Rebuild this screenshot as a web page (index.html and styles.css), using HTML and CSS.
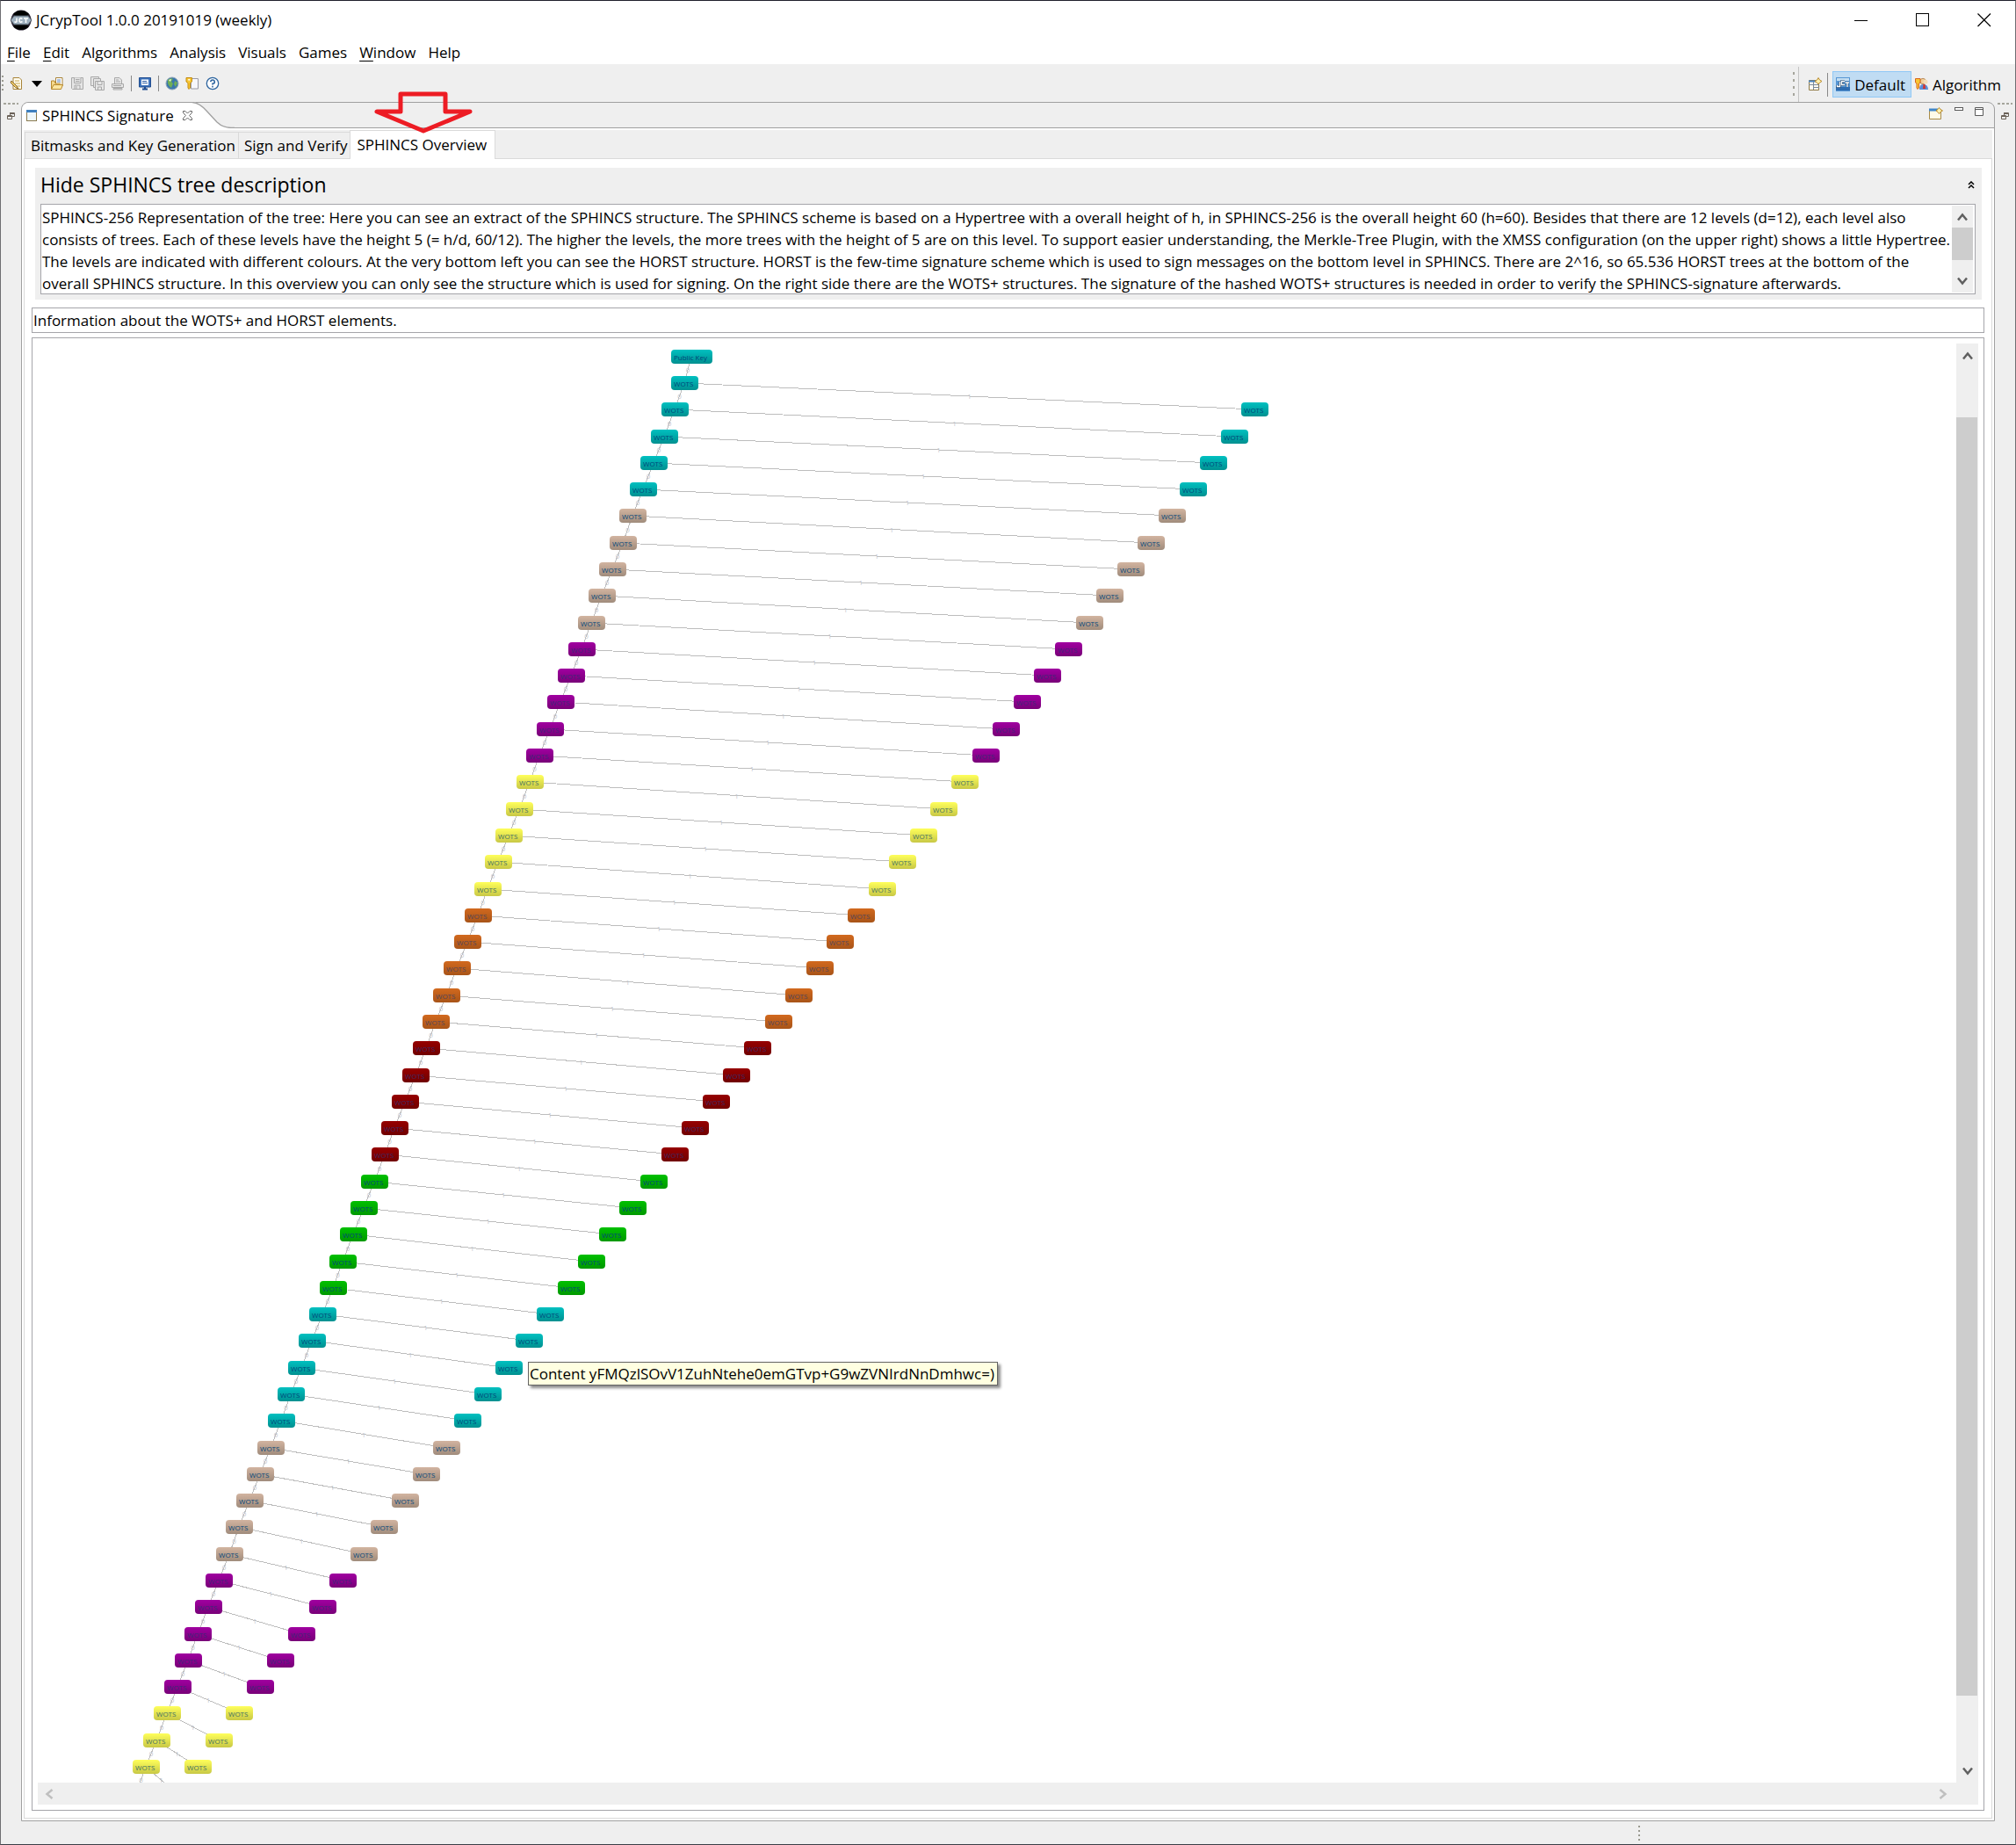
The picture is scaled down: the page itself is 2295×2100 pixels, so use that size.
FILE: index.html
```html
<!DOCTYPE html>
<html lang="en">
<head>
<meta charset="utf-8">
<title>JCrypTool 1.0.0 20191019 (weekly)</title>
<link rel="stylesheet" href="styles.css">
</head>
<body>
<div class="window">
  <header class="titlebar">
    <svg class="app-icon" width="24" height="24" viewBox="0 0 24 24">
      <circle cx="12" cy="12" r="11.5" fill="#2a2333"/>
      <path d="M3 5Q12-3 21 5L19 7H5ZM3 19Q12 27 21 19L19 17H5Z" fill="#000"/>
      <path d="M0 12L4 7H20L24 12L20 17H4Z" fill="#9fb0bf" stroke="#49525c"/>
      <path d="M7 9.500V13.500Q6 15 4.500 13.500M13.500 10.500Q10 8.500 10 12T13.500 13.500M15 10H20M17.500 10V15" fill="none" stroke="#fff" stroke-width="1.500"/>
    </svg>
    <h1 class="app-title">JCrypTool 1.0.0 20191019 (weekly)</h1>
    <div class="window-controls">
      <button class="control" aria-label="Minimize"><svg width="16" height="16"><path d="M0 8.500H15" stroke="#000"/></svg></button>
      <button class="control" aria-label="Maximize"><svg width="16" height="16"><rect x=".5" y=".5" width="14" height="14" fill="none" stroke="#000"/></svg></button>
      <button class="control" aria-label="Close"><svg width="16" height="16"><path d="M.5.5L15 15M15 .5L.5 15" stroke="#000" stroke-width="1.200"/></svg></button>
    </div>
  </header>
  <nav class="menubar">
    <button><u>F</u>ile</button>
    <button><u>E</u>dit</button>
    <button>Algorithms</button>
    <button>Analysis</button>
    <button>Visuals</button>
    <button>Games</button>
    <button><u>W</u>indow</button>
    <button>Help</button>
  </nav>

  <div class="toolbar">
    <span class="grip"></span>
    <button class="tool" aria-label="New"><svg width="16" height="16" viewBox="0 0 16 16"><path d="M4 1.500H11L13.500 4V14.500H4Z" fill="#fffdf0" stroke="#a88338"/><path d="M6 5H11M6 8H12M6 11H12" stroke="#c9a64e"/><path d="M2 5L8 11L10 14L6.500 12.500L1 7Z" fill="#f2cf6c" stroke="#8b6a2c"/></svg></button>
    <button class="tool" aria-label="New menu"><svg width="16" height="16" viewBox="0 0 16 16"><path d="M2 5H14L8 12Z" fill="#000"/></svg></button>
    <button class="tool" aria-label="Open"><svg width="16" height="16" viewBox="0 0 16 16"><path d="M6.500 1.500H14V11H6.500Z" fill="#fff" stroke="#a88338"/><path d="M8 4H12M8 6H12" stroke="#5f86bd"/><path d="M1.500 14V5H5L6 8H12" fill="#f5d98c" stroke="#b98a2d"/><path d="M1.500 14.500L4 9.500H14.500L12.500 14.500Z" fill="#fbe6a2" stroke="#b98a2d"/></svg></button>
    <button class="tool" aria-label="Save" disabled><svg width="16" height="16" viewBox="0 0 16 16" fill="#e6e6e6" stroke="#a8a8a8"><path d="M1.500 1.500H14.500V14.500H2.500L1.500 13.500Z"/><path d="M4.500 1.500V7.500H12V1.500M5 14V10H11V14M6 3.500H10.500M6 5.500H10.500M7 11V14"/></svg></button>
    <button class="tool" aria-label="Save all" disabled><svg width="16" height="16" viewBox="0 0 16 16" fill="#e6e6e6" stroke="#a8a8a8"><path d="M.5.5H9.500V10.500H.5Z"/><path d="M3.500 2.500H11.500V12.500H3.500Z"/><path d="M5.500 5.500H15.500V15.500H5.500Z"/><path d="M8 6V9.500H13V6M8.500 15V12H12.500V15"/></svg></button>
    <button class="tool" aria-label="Print" disabled><svg width="16" height="16" viewBox="0 0 16 16" fill="#e6e6e6" stroke="#a8a8a8"><path d="M4.500 8V1.500H10L12.500 4V8M6 4H9M6 6H11"/><path d="M1.500 8.500H14.500V12.500H1.500Z"/><path d="M3 13.500H13V15H3ZM3 10.500H12"/></svg></button>
    <span class="divider"></span>
    <button class="tool" aria-label="Console"><svg width="16" height="16" viewBox="0 0 16 16"><path d="M1.500 1.500H14.500V12H1.500Z" fill="#3f74bd" stroke="#1f4c8f"/><path d="M4 3.500H12V10H4Z" fill="#fff"/><path d="M5 5.500H10M5 7.500H11" stroke="#2f5fa5"/><path d="M5 14.500H11M8 12V14" stroke="#1f4c8f" stroke-width="2"/></svg></button>
    <span class="divider"></span>
    <button class="tool" aria-label="Web"><svg width="16" height="16" viewBox="0 0 16 16"><circle cx="8" cy="8" r="7" fill="#3976ae" stroke="#8fa5b5"/><path d="M3 4Q6 1 9 3L7 6L9 8L7 13Q2 10 3 4ZM11 5L14 7L12 12L10 9Z" fill="#6fae57"/><path d="M4 4L7 3L6 6Z" fill="#eef6e6"/></svg></button>
    <button class="tool" aria-label="Keystore"><svg width="16" height="16" viewBox="0 0 16 16"><path d="M6.500 2.500H14.500V14H6.500Z" fill="#f7f7fb" stroke="#9a9aa4"/><path d="M1 1.500H7.500V6L5.500 7.500V13L4 14.500L3 13V7.500L1 6Z" fill="#f8c633" stroke="#c28b12"/><circle cx="4.200" cy="3.800" r="1" fill="#fff"/></svg></button>
    <button class="tool" aria-label="Help"><svg width="16" height="16" viewBox="0 0 16 16"><circle cx="8" cy="8" r="6.700" fill="#fff" stroke="#2d649f" stroke-width="1.300"/><path d="M5.700 6.200Q6 4 8 4T10.300 6T8 8.300V9.500M8 10.800V12.400" fill="none" stroke="#2d649f" stroke-width="1.600"/></svg></button>
    <div class="perspectives">
      <span class="grip"></span>
      <span class="edge"></span>
      <button class="tool open-perspective" aria-label="Open perspective"><svg width="16" height="16" viewBox="0 0 16 16"><path d="M1.500 3.500H12.500V14.500H1.500Z" fill="#fffdf2" stroke="#8f7a45"/><path d="M1 4.500H11" stroke="#4a85c4" stroke-width="2"/><path d="M1 8.500H13M6.500 5V14M6.500 11.500H13" stroke="#7a8a9a"/><path d="M12 .5L13.500 3L16 4.500L13.500 6L12 8L10.500 6L8 4.500L10.500 3Z" fill="#fff3b0" stroke="#b98a2d"/></svg></button>
      <span class="divider"></span>
      <button class="perspective is-active"><svg width="16" height="16" viewBox="0 0 16 16"><path d="M0 0H16V16H0Z" fill="#5796d3"/><path d="M0 11H16V15H0Z" fill="#2e6cb0"/><path d="M1 1H15V4H1Z" fill="#c3def2"/><path d="M4.500 5V10.500H1.500V9M10 4.500H6.500V8.500H10M10.500 6H15M13 6V11" fill="none" stroke="#1d3f66" stroke-width="2.600"/><path d="M4.500 5V10.500H1.500V9M10 4.500H6.500V8.500H10M10.500 6H15M13 6V11" fill="none" stroke="#fff" stroke-width="1.400"/></svg>Default</button>
      <button class="perspective"><svg width="16" height="16" viewBox="0 0 16 16"><circle cx="9" cy="4.500" r="3.200" fill="#f0cf9c" stroke="#b98b5a"/><circle cx="12" cy="5" r="2.500" fill="#f3dcb8"/><path d="M5 14Q5 7.500 9.500 8Q15 8 15 14Z" fill="#5b8ed6"/><path d="M9.500 8H11.500L12 13H9Z" fill="#d8322a"/><path d="M.5 1.500H6V6L4.500 7V12L3 13.500L2 12V7L.5 6Z" fill="#f8c633" stroke="#d9641a"/></svg>Algorithm</button>
    </div>
  </div>

  <div class="workbench">
    <aside class="trim">
      <span class="trim-dots"></span>
      <button aria-label="Restore"><svg width="9" height="9" viewBox="0 0 9 9"><path d="M3 .5H8.500V4.500H6M3 1.500H8M3.500 1V3" fill="none" stroke="#6b6259"/><path d="M.5 3.500H5.500V7.500H.5ZM.5 4.500H5.500" fill="none" stroke="#6b6259"/></svg></button>
    </aside>

    <main class="folder">
      <div class="folder-head">
        <div class="view-tab">
          <svg width="12" height="13" viewBox="0 0 12 13"><rect x=".5" y=".5" width="11" height="12" fill="#eef7fb" stroke="#8b7a4e"/><path d="M0 1.500H12" stroke="#3f80bf" stroke-width="3"/></svg>
          <span>SPHINCS Signature</span>
          <button class="close-view" aria-label="Close view"><svg width="11" height="11" viewBox="0 0 11 11"><path d="M.5.5H3L5.500 3L8 .5H10.500V2.500L7.500 5.500L10.500 8.500V10.500H8L5.500 8L3 10.500H.5V8.500L3.500 5.500L.5 2.500Z" fill="#fff" stroke="#666"/></svg></button>
        </div>
        <svg class="tab-curve" width="48" height="30" viewBox="0 0 48 30"><path d="M0 30V0Q8 0 16 10L28 23Q34 29 44 29.500V30Z" fill="#fff"/><path d="M0 .5Q8 1 16 10L28 23Q34 29 44 29.500H48" fill="none" stroke="#a0a0a0" stroke-width="1.300"/></svg>
        <div class="folder-tools">
          <button aria-label="New view"><svg width="16" height="15" viewBox="0 0 16 15"><path d="M.5 2.500H13.500V13.500H.5Z" fill="#fffbe8" stroke="#a88b47"/><path d="M0 3H10" stroke="#3f86c9" stroke-width="3"/><path d="M11.500.5L13 2.500L15.500 4L13 5.500L11.500 7.500L10 5.500L8 4L10 2.500Z" fill="#fff3b0" stroke="#b98a2d"/></svg></button>
          <button aria-label="Minimize view"><svg width="10" height="10"><rect x=".5" y=".5" width="9" height="3" fill="#fff" stroke="#5a5a5a"/></svg></button>
          <button aria-label="Maximize view"><svg width="10" height="10"><path d="M.5.5H9.500V9.500H.5ZM0 2.500H10" fill="#fff" stroke="#5a5a5a"/></svg></button>
        </div>
      </div>

      <div class="folder-body">
        <div class="page-tabs" role="tablist">
          <button class="page-tab" role="tab">Bitmasks and Key Generation</button>
          <button class="page-tab" role="tab">Sign and Verify</button>
          <button class="page-tab is-active" role="tab" aria-selected="true">SPHINCS Overview
            <svg class="pointer" width="114" height="50" viewBox="0 0 114 50"><path d="M31 4H82V24H110L57 46L4 24H31Z" fill="none" stroke="#ed1c24" stroke-width="5" stroke-linejoin="round"/></svg>
          </button>
        </div>
        <div class="page">
          <section class="description">
            <div class="description-head">
              <h2 id="desc-title">Hide SPHINCS tree description</h2>
              <button aria-label="Collapse"><svg width="8" height="9" viewBox="0 0 8 9"><path d="M1 4L4 1L7 4M1 8L4 5L7 8" fill="none" stroke="#000" stroke-width="1.500"/></svg></button>
            </div>
            <div class="description-box">
              <textarea rows="4" readonly aria-labelledby="desc-title">SPHINCS-256 Representation of the tree: Here you can see an extract of the SPHINCS structure. The SPHINCS scheme is based on a Hypertree with a overall height of h, in SPHINCS-256 is the overall height 60 (h=60). Besides that there are 12 levels (d=12), each level also
consists of trees. Each of these levels have the height 5 (= h/d, 60/12). The higher the levels, the more trees with the height of 5 are on this level. To support easier understanding, the Merkle-Tree Plugin, with the XMSS configuration (on the upper right) shows a little Hypertree.
The levels are indicated with different colours. At the very bottom left you can see the HORST structure. HORST is the few-time signature scheme which is used to sign messages on the bottom level in SPHINCS. There are 2^16, so 65.536 HORST trees at the bottom of the
overall SPHINCS structure. In this overview you can only see the structure which is used for signing. On the right side there are the WOTS+ structures. The signature of the hashed WOTS+ structures is needed in order to verify the SPHINCS-signature afterwards.</textarea>
              <div class="scroll-v">
                <svg width="12" height="10" viewBox="0 0 12 10"><path d="M1 8.500L6 2.500L11 8.500" fill="none" stroke="#606060" stroke-width="2.500"/></svg>
                <span class="thumb thumb-short"></span>
                <svg width="12" height="10" viewBox="0 0 12 10"><path d="M1 1.500L6 7.500L11 1.500" fill="none" stroke="#606060" stroke-width="2.500"/></svg>
              </div>
            </div>
          </section>
          <input class="info" type="text" readonly aria-label="Element information" value="Information about the WOTS+ and HORST elements.">
          <div class="graph">
            <div class="graph-view">
              <div class="canvas" id="canvas">
                <svg class="links" id="links"></svg>
                <div class="tooltip" role="tooltip">Content yFMQzlSOvV1ZuhNtehe0emGTvp+G9wZVNIrdNnDmhwc=)</div>
              </div>
              <div class="scroll-v graph-scroll">
                <svg width="12" height="10" viewBox="0 0 12 10"><path d="M1 8.500L6 2.500L11 8.500" fill="none" stroke="#606060" stroke-width="2.500"/></svg>
                <span class="track"><span class="thumb"></span></span>
                <svg width="12" height="10" viewBox="0 0 12 10"><path d="M1 1.500L6 7.500L11 1.500" fill="none" stroke="#606060" stroke-width="2.500"/></svg>
              </div>
            </div>
            <div class="scroll-h">
              <svg width="10" height="12" viewBox="0 0 10 12"><path d="M8.500 1L2.500 6L8.500 11" fill="none" stroke="#bfbfbf" stroke-width="2.500"/></svg>
              <svg width="10" height="12" viewBox="0 0 10 12"><path d="M1.500 1L7.500 6L1.500 11" fill="none" stroke="#bfbfbf" stroke-width="2.500"/></svg>
            </div>
          </div>
        </div>
      </div>
    </main>

    <aside class="trim">
      <span class="trim-dots"></span>
      <button aria-label="Restore"><svg width="9" height="9" viewBox="0 0 9 9"><path d="M3 .5H8.500V4.500H6M3 1.500H8M3.500 1V3" fill="none" stroke="#6b6259"/><path d="M.5 3.500H5.500V7.500H.5ZM.5 4.500H5.500" fill="none" stroke="#6b6259"/></svg></button>
    </aside>
  </div>
  <footer class="statusbar"><span class="grip"></span></footer>
</div>
<script src="tree.js"></script>
</body>
</html>
```
FILE: styles.css
```css
* { box-sizing: border-box; }

body {
  margin: 0;
  background: #efefef;
  color: #000;
  font: 17px/25px "Open Sans", "Noto Sans", sans-serif;
}

button {
  display: flex;
  align-items: center;
  padding: 0;
  border: 0;
  background: none;
  color: inherit;
  font: inherit;
  white-space: nowrap;
}

svg { display: block; flex: none; }

.window {
  display: flex;
  flex-direction: column;
  height: 100vh;
  min-height: 800px;
  border: 1px solid #6e6e72;
  border-top-color: #20202c;
  border-bottom-color: #3a3f46;
}

/* Title bar and menu */
.titlebar {
  display: flex;
  align-items: center;
  height: 43px;
  padding-left: 11px;
  background: #fff;
}
.app-title { margin: 0 0 0 5px; font: inherit; }
.window-controls { display: flex; margin-left: auto; align-self: stretch; }
.control { justify-content: center; width: 70px; }

.menubar {
  display: flex;
  gap: 14px;
  height: 29px;
  padding: 2px 0 0 7px;
  background: #fff;
}
.menubar u { text-underline-offset: 3px; }

/* Tool bar */
.toolbar {
  display: flex;
  align-items: center;
  height: 43px;
  padding-left: 1px;
}
.toolbar > .tool { width: 23px; justify-content: center; }
.toolbar > .grip { margin-right: 3px; }
.grip {
  width: 2px;
  height: 17px;
  background: repeating-linear-gradient(#9a9a90 0 2px, transparent 2px 5px);
}
.divider { width: 1px; height: 18px; margin: 0 3px 0 4px; background: #888; }

.perspectives {
  display: flex;
  align-items: center;
  height: 100%;
  margin-left: auto;
  padding: 3px 12px 0 0;
}
.perspectives > .grip { height: 29px; background: repeating-linear-gradient(#a5a59c 0 3px, transparent 3px 8px); }
.edge { width: 1px; height: 100%; margin: 0 10px 0 4px; background: #c4c4c4; }
.perspectives .divider { height: 27px; margin: 0 5px 0 6px; }
.perspective { gap: 4px; height: 30px; padding: 0 3px; border: 1px solid transparent; }
.perspective.is-active { gap: 5px; padding: 0 6px 0 3px; border-color: #90c8f6; background: #c0dcf3; }

/* Work area */
.workbench { display: flex; flex: 1; min-height: 0; }
.trim {
  display: flex;
  flex-direction: column;
  align-items: center;
  gap: 9px;
  width: 23px;
  padding-top: 1px;
}
.trim-dots {
  width: 17px;
  height: 2px;
  background: repeating-linear-gradient(90deg, #a5a59c 0 3px, transparent 3px 5px);
}

.folder {
  display: flex;
  flex: 1;
  flex-direction: column;
  min-width: 0;
  border: 1px solid #a0a0a0;
  border-radius: 8px 8px 0 0;
  background: #efefef;
}
.folder-head { display: flex; height: 29px; border-bottom: 1px solid #a0a0a0; }
.view-tab {
  display: flex;
  align-items: center;
  gap: 6px;
  height: 29px;
  padding-left: 5px;
  border-radius: 8px 0 0 0;
  background: #fff;
}
.close-view { margin-left: 4px; }
.tab-curve { margin-top: -1px; }
.folder-tools { display: flex; gap: 13px; margin-left: auto; padding: 5px 12px 0 0; align-items: flex-start; }

.folder-body {
  display: flex;
  flex: 1;
  flex-direction: column;
  min-height: 0;
  border: 2px solid #fff;
}
.page-tabs { display: flex; align-items: flex-end; height: 32px; padding-left: 1px; }
.page-tab {
  height: 30px;
  padding: 0 3px 0 6px;
  border: 1px solid #dadada;
  border-width: 1px 0 0 1px;
}
.page-tab.is-active {
  position: relative;
  height: 33px;
  margin-bottom: -1px;
  padding: 0 9px 2px 7px;
  border-right-width: 1px;
  background: #fff;
}
.pointer { position: absolute; left: 26px; top: -46px; pointer-events: none; }

.page {
  display: flex;
  flex: 1;
  flex-direction: column;
  min-height: 0;
  padding: 10px 8px 8px;
  border: 1px solid #dadada;
  background: #fff;
}

/* Description */
.description {
  margin: 0 3px 9px 4px;
  padding: 0 7px 6px 6px;
  background: #efefef;
}
.description-head {
  display: flex;
  align-items: center;
  justify-content: space-between;
  height: 41px;
  padding: 0 1px 3px 0;
}
.description-head h2 { margin: 0; font: 23px/32px "Open Sans", "Noto Sans", sans-serif; }
.description-box {
  display: flex;
  height: 103px;
  padding: 1px 2px 1px 0;
  border: 1px solid #a5a5aa;
  background: #fff;
}
.description-box textarea {
  display: block;
  flex: 1;
  min-width: 0;
  padding: 1px 1px 0;
  border: 0;
  outline: 0;
  background: none;
  color: inherit;
  font: inherit;
  white-space: pre;
  overflow: hidden;
  resize: none;
}

.scroll-v {
  display: flex;
  flex-direction: column;
  align-items: center;
  justify-content: space-between;
  width: 24px;
  padding: 8px 0;
  background: #efefef;
}
.thumb { display: block; width: 100%; background: #cdcdcd; }
.thumb-short { height: 37px; margin-bottom: 12px; }

.info {
  display: block;
  width: 100%;
  height: 29px;
  margin-bottom: 5px;
  padding: 0 1px;
  border: 1px solid #a5a5aa;
  outline: 0;
  background: #fff;
  color: inherit;
  font: inherit;
}

/* Tree graph */
.graph {
  display: flex;
  flex: 1;
  flex-direction: column;
  min-height: 0;
  padding: 6px;
  border: 1px solid #a5a5aa;
}
.graph-view { display: flex; flex: 1; min-height: 0; }
.canvas { position: relative; flex: 1; overflow: hidden; }
.links { width: 100%; height: 100%; }
.links line { stroke: #bdbdbd; shape-rendering: crispEdges; }
.links text { fill: #c4c8d0; font-size: 8px; text-anchor: middle; }
.graph-scroll { width: 25px; padding: 9px 0 8px; }
.track { flex: 1; width: 100%; padding: 65px 1px 81px 0; }
.track .thumb { height: 100%; }
.scroll-h {
  display: flex;
  align-items: center;
  justify-content: space-between;
  height: 25px;
  padding: 0 35px 0 8px;
  background: #efefef;
}

.node {
  position: absolute;
  width: 31px;
  height: 16px;
  padding-left: 3px;
  border-radius: 4px;
  color: #00467a;
  font-size: 8px;
  line-height: 18px;
  white-space: nowrap;
}
.node-key { width: 47px; }
.teal { background: linear-gradient(#00c0c0, #009090); }
.tan { background: linear-gradient(#d2b4a0, #a08c7c); }
.purple { background: linear-gradient(#a000a0, #780078); color: #3c2878; }
.yellow { background: linear-gradient(#ffff5a, #c8c846); color: #3c6e64; }
.orange { background: linear-gradient(#d2691e, #a85418); color: #50465a; }
.maroon { background: linear-gradient(#960000, #700000); color: #3c2864; }
.green { background: linear-gradient(#00c000, #009800); }

.tooltip {
  position: absolute;
  left: 558px;
  top: 1159px;
  z-index: 1;
  height: 27px;
  padding: 0 3px 0 1px;
  border: 1px solid #646464;
  background: #ffffe1;
  box-shadow: 3px 3px 3px rgba(0, 0, 0, .45);
  white-space: nowrap;
}

.statusbar { display: flex; align-items: center; height: 26px; }
.statusbar .grip { margin-left: auto; margin-right: 427px; }
```
FILE: tree.js
```js
// Builds the SPHINCS hypertree: a signing path down the left, one WOTS sibling per step on the right.
const COLOURS = ['teal', 'tan', 'purple', 'yellow', 'orange', 'maroon', 'green'];
const ROWS = 53;
const NODE_W = 31;
const NODE_H = 16;

const canvas = document.getElementById('canvas');
const links = document.getElementById('links');
const SVG = 'http://www.w3.org/2000/svg';

const rowY = row => Math.round(37.03 + 30.289 * row);
const pathX = row => Math.floor(721.94 - 11.79 * row);
const siblingX = row => Math.round(1393.9 - 23.595 * row);

function addNode(x, y, label, colour) {
  const node = document.createElement('div');
  node.className = 'node ' + colour;
  node.style.left = x + 'px';
  node.style.top = y + 'px';
  node.textContent = label;
  canvas.append(node);
}

function addLink(x1, y1, x2, y2, label) {
  const line = document.createElementNS(SVG, 'line');
  Object.entries({ x1, y1, x2, y2 }).forEach(([k, v]) => line.setAttribute(k, v));
  const text = document.createElementNS(SVG, 'text');
  text.setAttribute('x', (x1 + x2) / 2);
  text.setAttribute('y', (y1 + y2) / 2 + 3);
  text.textContent = label;
  links.append(line, text);
}

const cx = x => x + Math.floor(NODE_W / 2);
const cy = y => y + NODE_H / 2;

addNode(721, 7, 'Public Key', 'teal node-key');
addLink(744, 15, cx(721), cy(rowY(0)), '0');

for (let row = 0; row < ROWS; row++) {
  const colour = COLOURS[Math.floor(row / 5) % COLOURS.length];
  addNode(pathX(row), rowY(row), 'WOTS', colour);
  if (row > 0) addNode(siblingX(row), rowY(row), 'WOTS', colour);
  addLink(cx(pathX(row)), cy(rowY(row)), cx(pathX(row + 1)), cy(rowY(row + 1)), '0');
  addLink(cx(pathX(row)), cy(rowY(row)), cx(siblingX(row + 1)), cy(rowY(row + 1)), '1');
}
```
